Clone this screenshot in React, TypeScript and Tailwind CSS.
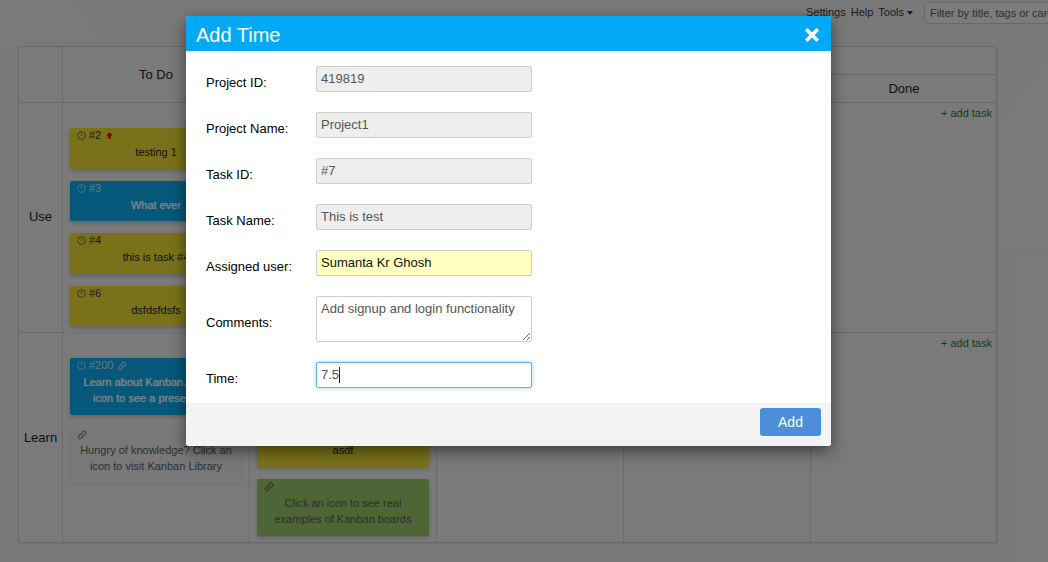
import React from "react";

const font = { fontFamily: '"Liberation Sans", Arial, sans-serif' };

function ClockIcon({ light }: { light?: boolean }) {
  return (
    <svg width="9" height="9" viewBox="0 0 10 10" fill="none" stroke={light ? "#ffffff" : "#333333"} strokeOpacity={light ? 0.6 : 0.8} strokeWidth="0.9" className="shrink-0">
      <circle cx="5" cy="5" r="4.3" />
      <path d="M5 2.4V5.4" />
    </svg>
  );
}

function LinkIcon({ light }: { light?: boolean }) {
  return (
    <svg width="10" height="10" viewBox="0 0 10 10" fill="none" stroke={light ? "#ffffff" : "#333333"} strokeOpacity="0.6" strokeWidth="1.1" className="shrink-0">
      <path d="M4.4 3.2 5.9 1.7a1.7 1.7 0 0 1 2.4 2.4L6.8 5.6a1.7 1.7 0 0 1-2.4 0" />
      <path d="M5.6 6.8 4.1 8.3a1.7 1.7 0 0 1-2.4-2.4L3.2 4.4a1.7 1.7 0 0 1 2.4 0" />
    </svg>
  );
}

function ArrowUp() {
  return (
    <svg width="7" height="7" viewBox="0 0 8 8" className="ml-[5px] shrink-0">
      <path d="M4 0.3 7.7 4H5.5V7.7H2.5V4H0.3Z" fill="#ee0000" />
    </svg>
  );
}

type CardProps = {
  h: string;
  bg: string;
  light?: boolean;
  num?: string;
  clock?: boolean;
  link?: boolean;
  arrow?: boolean;
  lines: string[];
  muted?: boolean;
  tight?: boolean;
  soft?: boolean;
};

function Card({ h, bg, light, num, clock, link, arrow, lines, muted, tight, soft }: CardProps) {
  return (
    <div className={`${h} ${bg} w-[172px] rounded-[2px] ${soft ? "shadow-[0_1px_3px_rgba(0,0,0,0.1)]" : "shadow-[0_2px_4px_rgba(0,0,0,0.2)]"} px-[7px] pt-px`}>
      <div className={`flex items-center h-[11px] mt-[1px] text-[11px] leading-[11px] ${light ? "text-white/70" : "text-[#333333]"}`}>
        {clock && <ClockIcon light={light} />}
        {num && <span className="ml-[3px]">{num}</span>}
        {arrow && <ArrowUp />}
        {link && <span className={num ? "ml-[4px]" : ""}><LinkIcon light={light} /></span>}
      </div>
      <div
        className={`text-center text-[11px] leading-[16px] whitespace-nowrap ${tight ? "mt-[2px]" : "mt-[3px]"} ${
          light ? "text-white/80 [text-shadow:0_0_1px_rgba(255,255,255,0.7)]" : muted ? "text-[#555555]" : "text-[#222222]"
        }`}
      >
        {lines.map((l) => (
          <div key={l}>{l}</div>
        ))}
      </div>
    </div>
  );
}

function AddTask() {
  return <div className="text-right text-[11px] leading-[13px] pr-[4px] pt-[4px] text-[#2a6a2a]">+ add task</div>;
}

const hCell = "border-r border-[#c0c0c0] flex items-center justify-center text-[13px] text-[#222222]";
const bodyCell = "border-r border-dotted border-[#a8a8a8] px-[7px] pt-[25px] flex flex-col";

function Field({ label, value }: { label: string; value: string }) {
  return (
    <div className="flex">
      <label className="w-[110px] pt-[8px] text-[13px] leading-[17px] text-black">{label}</label>
      <input
        readOnly
        value={value}
        className="w-[216px] h-[26px] border border-[#cccccc] rounded-[2px] bg-[#eeeeee] pl-[4px] pb-[1px] text-[13px] text-[#555555] outline-none"
      />
    </div>
  );
}

export default function App() {
  return (
    <div style={font} className="relative w-[1048px] h-[562px] overflow-hidden bg-[#dddddd]">
      <svg className="absolute inset-0 pointer-events-none" width="1048" height="562" viewBox="0 0 1048 562">
        <path d="M0 0H66Q90 22 104 46H0Z" fill="#ffffff" fillOpacity="0.03" />
        <path d="M1048 60V250H997V130Z" fill="#ffffff" fillOpacity="0.03" />
      </svg>

      <div className="relative flex items-center justify-end h-[24px] pt-[1px] -mr-[60px] text-[11px] text-[#333333]">
        <span>Settings</span>
        <span className="ml-[5px]">Help</span>
        <span className="ml-[5px]">Tools</span>
        <span className="ml-[3px] w-0 h-0 border-x-[3px] border-x-transparent border-t-[4px] border-t-[#333333]" />
        <div className="ml-[11px] w-[184px] h-[22px] shrink-0 border border-[#c0c0c0] rounded-[4px] bg-[#e2e2e2] pl-[5px] text-[11px] leading-[20px] text-[#555555] whitespace-nowrap overflow-hidden">
          Filter by title, tags or card
        </div>
      </div>

      <div className="relative mt-[22px] ml-[18px] w-[979px] h-[497px] border border-[#c0c0c0] rounded-[3px] bg-[#dfdfdf] shadow-[0_1px_3px_rgba(0,0,0,0.1)] grid grid-cols-[44px_187px_187px_187px_187px_185px] grid-rows-[28px_28px_230px_209px]">
        <div className={`${hCell} row-span-2 border-b`} />
        <div className={`${hCell} row-span-2 border-b`}>To Do</div>
        <div className="col-span-4 border-b border-[#c0c0c0]" />
        <div className={`${hCell} border-b`} />
        <div className={`${hCell} border-b`} />
        <div className={`${hCell} border-b`} />
        <div className="border-b border-[#c0c0c0] flex items-center justify-center text-[13px] text-[#222222] pt-[1px] pl-[1px]">Done</div>

        <div className={`${hCell} border-b pb-[1px]`}>Use</div>
        <div className={`${bodyCell} border-b border-b-[#c0c0c0] gap-[12px]`}>
          <Card h="h-[41px]" bg="bg-[#dfcf32]" clock num="#2" arrow lines={["testing 1"]} />
          <Card h="h-[40px]" bg="bg-[#0aa0dc]" light clock num="#3" lines={["What ever"]} />
          <Card h="h-[41px]" bg="bg-[#dfcf32]" clock num="#4" lines={["this is task #4"]} />
          <Card h="h-[40px]" bg="bg-[#dfcf32]" clock num="#6" lines={["dsfdsfdsfs"]} />
        </div>
        <div className={`${bodyCell} border-b border-b-[#c0c0c0]`} />
        <div className={`${bodyCell} border-b border-b-[#c0c0c0]`} />
        <div className={`${bodyCell} border-b border-b-[#c0c0c0]`} />
        <div className="border-b border-[#c0c0c0]">
          <AddTask />
        </div>

        <div className={hCell}>Learn</div>
        <div className={`${bodyCell} gap-[12px]`}>
          <Card h="h-[57px]" bg="bg-[#0aa0dc]" light clock num="#200" link lines={["Learn about Kanban. Click an", "icon to see a presentation"]} />
          <Card h="h-[56px]" bg="bg-[#dbdbdb]" muted tight soft link lines={["Hungry of knowledge? Click an", "icon to visit Kanban Library"]} />
        </div>
        <div className={`${bodyCell} pt-[93px] gap-[12px]`}>
          <Card h="h-[41px]" bg="bg-[#dfcf32]" clock num="#9" lines={["asdf"]} />
          <Card h="h-[57px]" bg="bg-[#8eb862]" muted link lines={["Click an icon to see real", "examples of Kanban boards"]} />
        </div>
        <div className={bodyCell} />
        <div className={bodyCell} />
        <div>
          <AddTask />
        </div>
      </div>

      <div className="absolute inset-0 bg-black/45">
        <div className="ml-[186px] mt-[16px] w-[645px] h-[430px] rounded-[3px] bg-white shadow-[0_5px_15px_rgba(0,0,0,0.5)] overflow-hidden flex flex-col">
          <div className="h-[35px] bg-[#03a9f4] flex items-center justify-between pl-[10px] pr-[12px] pt-[2px] text-white text-[20px]">
            <span>Add Time</span>
            <svg width="14" height="14" viewBox="0 0 14 14" stroke="#ffffff" strokeWidth="3.6">
              <path d="M1.2 1.2 12.8 12.8M12.8 1.2 1.2 12.8" />
            </svg>
          </div>
          <div className="flex-1 pt-[15px] pl-[20px] flex flex-col gap-[20px]">
            <Field label="Project ID:" value="419819" />
            <Field label="Project Name:" value="Project1" />
            <Field label="Task ID:" value="#7" />
            <Field label="Task Name:" value="This is test" />
            <div className="flex">
              <label className="w-[110px] pt-[8px] text-[13px] leading-[17px] text-black">Assigned user:</label>
              <input
                readOnly
                value="Sumanta Kr Ghosh"
                className="w-[216px] h-[26px] border border-[#cccccc] rounded-[2px] bg-[#ffffc0] pl-[4px] pb-[1px] text-[13px] text-[#111111] outline-none"
              />
            </div>
            <div className="flex">
              <label className="w-[110px] pt-[18px] text-[13px] leading-[17px] text-black">Comments:</label>
              <textarea
                readOnly
                value="Add signup and login functionality"
                className="w-[216px] h-[46px] border border-[#cccccc] rounded-[2px] bg-white pl-[4px] pt-[4px] text-[13px] leading-[16px] text-[#555555] outline-none"
              />
            </div>
            <div className="flex">
              <label className="w-[110px] pt-[8px] text-[13px] leading-[17px] text-black">Time:</label>
              <div className="w-[216px] h-[26px] border border-[#66afe9] rounded-[2px] bg-white pl-[4px] flex items-center text-[13px] text-[#555555] shadow-[0_0_4px_rgba(102,175,233,0.6)]">
                <span>7.5</span>
                <span className="w-px h-[16px] bg-[#222222]" />
              </div>
            </div>
          </div>
          <div className="h-[43px] bg-[#f3f3f3] flex justify-end pt-[5px] pr-[10px]">
            <button className="w-[61px] h-[28px] rounded-[3px] bg-[#4a8fd8] text-white text-[14px]">Add</button>
          </div>
        </div>
      </div>
    </div>
  );
}
